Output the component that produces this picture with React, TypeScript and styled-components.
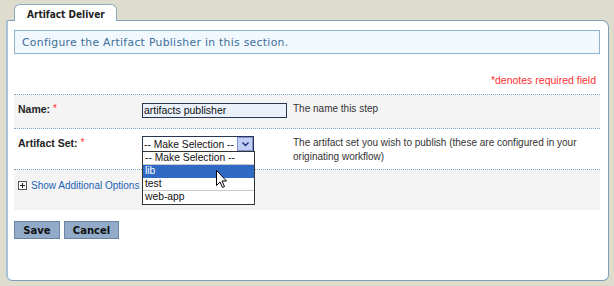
import styled, { createGlobalStyle } from 'styled-components';

const GlobalStyle = createGlobalStyle`
  html, body {
    margin: 0;
    padding: 0;
    background-color: #dedccd;
  }
  body {
    font-family: "Liberation Sans", Arial, sans-serif;
    font-size: 10px;
  }
`;

const Page = styled.div`
  width: 614px;
  height: 286px;
  box-sizing: border-box;
  padding: 4px 5px 5px 6px;
  display: flex;
  flex-direction: column;
`;

const Tab = styled.div`
  align-self: flex-start;
  margin-left: 8px;
  width: 103px;
  height: 17px;
  box-sizing: border-box;
  padding: 4px 0 0 12px;
  background-color: #ffffff;
  border: 1px solid #8eabc2;
  border-bottom: none;
  border-radius: 6px 6px 0 0;
  font-family: "DejaVu Sans Condensed", "DejaVu Sans", sans-serif;
  font-weight: bold;
  font-size: 10px;
  color: #222;
  position: relative;
  z-index: 1;
  margin-bottom: -1px;
`;

const Panel = styled.div`
  flex: 1;
  position: relative;
  background-color: #ffffff;
  border: 1px solid #7f9fb8;
  border-left: 2px solid #a8c2d6;
  border-radius: 0 7px 6px 6px;
  padding: 9px 8px 0 6px;
  display: flex;
  flex-direction: column;
`;

const InfoBox = styled.div`
  height: 24px;
  box-sizing: border-box;
  border: 1px solid #90b2cb;
  background-color: #f1f8fe;
  color: #3d6f98;
  font-family: "DejaVu Sans", sans-serif;
  font-size: 10.8px;
  letter-spacing: 0.3px;
  display: flex;
  align-items: center;
  padding-left: 7px;
`;

const Required = styled.div`
  text-align: right;
  color: #ff3030;
  font-size: 10.5px;
  padding: 20px 4px 0 0;
  height: 20px;
  box-sizing: content-box;
`;

const Form = styled.div`
  border-top: 1px dotted #7fa6c6;
  display: flex;
  flex-direction: column;
`;

const Row = styled.div<{ shaded?: boolean; h: number }>`
  height: ${(p) => p.h}px;
  box-sizing: border-box;
  background-color: ${(p) => (p.shaded ? '#f4f4f4' : '#ffffff')};
  border-bottom: 1px dotted #7fa6c6;
  display: grid;
  grid-template-columns: 124px 151px 1fr;
  padding: 7px 0 0 4px;
  &:last-child {
    border-bottom: none;
  }
`;

const Label = styled.div`
  font-weight: bold;
  font-size: 10.5px;
  color: #222;
  padding-top: 1px;
`;

const Star = styled.span`
  color: #ff3030;
  font-weight: normal;
  margin-left: 3px;
  font-size: 10px;
  vertical-align: top;
`;

const TextInput = styled.div`
  width: 145px;
  height: 15px;
  box-sizing: border-box;
  border: 1px solid #2a3552;
  background-color: #eaf1fa;
  font-size: 10.5px;
  color: #111;
  padding-left: 1px;
  line-height: 13px;
  margin-top: 1px;
`;

const Description = styled.div`
  color: #333;
  font-size: 10px;
  line-height: 14px;
`;

const Select = styled.div`
  width: 112px;
  height: 16px;
  box-sizing: border-box;
  border: 1px solid #2a3552;
  background-color: #ffffff;
  display: flex;
  align-items: center;
  padding-left: 1px;
  font-size: 10.3px;
  color: #111;
  position: relative;
`;

const SelectArrow = styled.div`
  position: absolute;
  right: 0;
  top: 0;
  width: 16px;
  height: 14px;
  box-sizing: border-box;
  border: 1px solid #7d8fd6;
  background-color: #c2cff2;
  display: flex;
  align-items: center;
  justify-content: center;
`;

const DropList = styled.div`
  position: absolute;
  left: 134px;
  top: 130px;
  width: 113px;
  box-sizing: border-box;
  border: 1px solid #333;
  background-color: #ffffff;
  z-index: 2;
`;

const Option = styled.div<{ active?: boolean }>`
  height: 13px;
  box-sizing: border-box;
  line-height: 12px;
  padding-left: 2px;
  font-size: 10.3px;
  color: ${(p) => (p.active ? '#ffffff' : '#111')};
  background-color: ${(p) => (p.active ? '#316ac5' : '#ffffff')};
  border-bottom: 1px solid ${(p) => (p.active ? '#316ac5' : '#c9c9c9')};
  &:last-child {
    border-bottom: none;
  }
`;

const Cursor = styled.svg`
  position: absolute;
  left: 208px;
  top: 149px;
  z-index: 3;
`;

const ToggleLink = styled.div`
  grid-column: 1 / -1;
  display: flex;
  align-items: center;
  gap: 4px;
  color: #1b63b4;
  font-size: 10px;
  padding-top: 1px;
  height: 14px;
  white-space: nowrap;
`;

const PlusBox = styled.span`
  flex-shrink: 0;
  width: 7px;
  height: 7px;
  border: 1px solid #555;
  background: #fff;
  position: relative;
  display: inline-block;
  &:before {
    content: '';
    position: absolute;
    left: 1px;
    top: 3px;
    width: 5px;
    height: 1px;
    background: #222;
  }
  &:after {
    content: '';
    position: absolute;
    left: 3px;
    top: 1px;
    width: 1px;
    height: 5px;
    background: #222;
  }
`;

const Buttons = styled.div`
  display: flex;
  gap: 4px;
  margin-top: 11px;
`;

const Button = styled.div<{ w: number }>`
  width: ${(p) => p.w}px;
  height: 18px;
  box-sizing: border-box;
  background-color: #91abc9;
  border: 1px solid #6a85a3;
  font-family: "DejaVu Sans", sans-serif;
  font-weight: bold;
  font-size: 10px;
  color: #111;
  display: flex;
  align-items: center;
  justify-content: center;
`;

const App = () => {
  return (
    <Page>
      <GlobalStyle />
      <Tab>Artifact Deliver</Tab>
      <Panel>
        <InfoBox>Configure the Artifact Publisher in this section.</InfoBox>
        <Required>*denotes required field</Required>
        <Form>
          <Row shaded h={34}>
            <Label>
              Name:<Star>*</Star>
            </Label>
            <div>
              <TextInput>artifacts publisher</TextInput>
            </div>
            <Description>The name this step</Description>
          </Row>
          <Row h={41}>
            <Label>
              Artifact Set:<Star>*</Star>
            </Label>
            <div>
              <Select>
                -- Make Selection --
                <SelectArrow>
                  <svg width="7" height="5" viewBox="0 0 7 5">
                    <path d="M0.5 0.5 L3.5 3.5 L6.5 0.5" fill="none" stroke="#1d2f7a" strokeWidth="1.4" />
                  </svg>
                </SelectArrow>
              </Select>
            </div>
            <Description>
              The artifact set you wish to publish (these are configured in your originating workflow)
            </Description>
          </Row>
          <Row shaded h={40}>
            <ToggleLink>
              <PlusBox />
              Show Additional Options
            </ToggleLink>
          </Row>
        </Form>
        <DropList>
          <Option>-- Make Selection --</Option>
          <Option active>lib</Option>
          <Option>test</Option>
          <Option>web-app</Option>
        </DropList>
        <Cursor width="12" height="19" viewBox="0 0 12 19">
          <path d="M0.5 0.5 L0.5 15.5 L4 12 L6.5 17.5 L8.5 16.5 L6 11 L10.5 11 Z" fill="#ffffff" stroke="#000" strokeWidth="1" />
        </Cursor>
        <Buttons>
          <Button w={46}>Save</Button>
          <Button w={55}>Cancel</Button>
        </Buttons>
      </Panel>
    </Page>
  );
};

export default App;
